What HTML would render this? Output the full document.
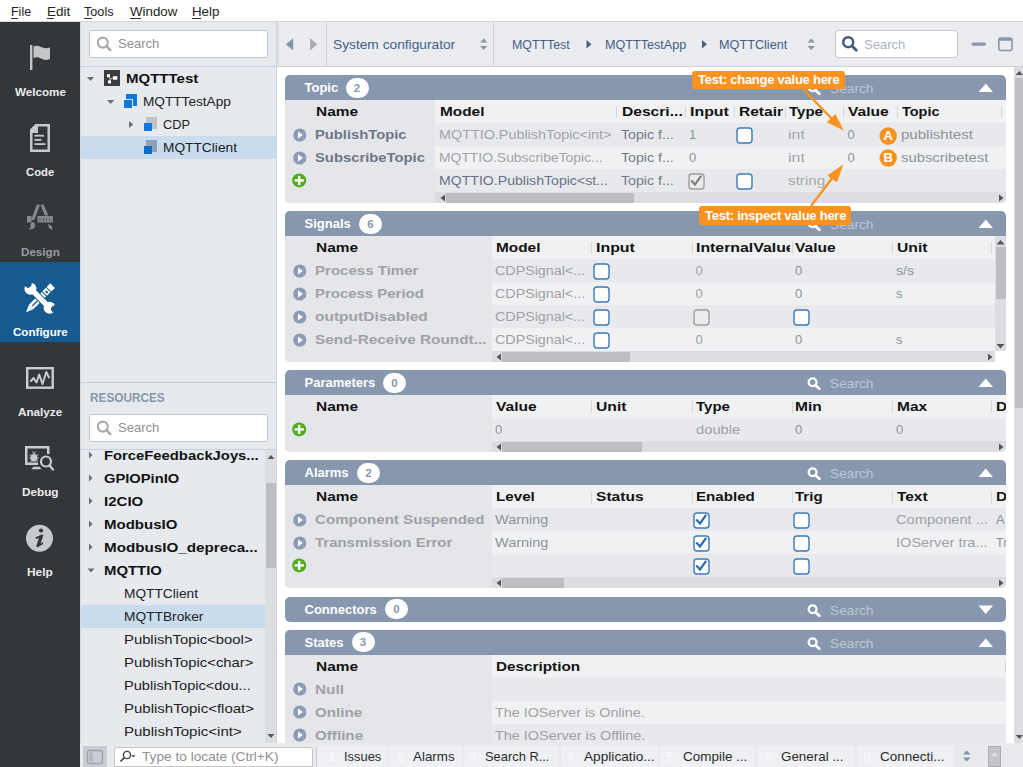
<!DOCTYPE html>
<html><head><meta charset="utf-8">
<style>
*{margin:0;padding:0;box-sizing:border-box}
html,body{width:1023px;height:767px;overflow:hidden;background:#fff;font-family:"Liberation Sans",sans-serif;position:relative}
.a{position:absolute}
.tx{white-space:nowrap}
.sbox{position:absolute;background:#fff;border:1px solid #c4c6ca;border-radius:3px}
.ul{position:absolute;height:1px;background:#333}
</style></head>
<body>

<div class="a" style="left:0;top:0;width:1023px;height:22px;background:#fff;border-bottom:1px solid #d6d6d6"></div>
<span class="a tx" style="left:11px;top:4px;line-height:15px;font-size:13px;transform:scaleX(0.9586);transform-origin:0 0;color:#232323;">File</span>
<div class="ul" style="left:11px;top:18px;width:7px"></div>
<span class="a tx" style="left:46.5px;top:4px;line-height:15px;font-size:13px;transform:scaleX(1.0371);transform-origin:0 0;color:#232323;">Edit</span>
<div class="ul" style="left:46.5px;top:18px;width:7.5px"></div>
<span class="a tx" style="left:84px;top:4px;line-height:15px;font-size:13px;transform:scaleX(0.9741);transform-origin:0 0;color:#232323;">Tools</span>
<div class="ul" style="left:84px;top:18px;width:7.5px"></div>
<span class="a tx" style="left:130.3px;top:4px;line-height:15px;font-size:13px;transform:scaleX(1.0233);transform-origin:0 0;color:#232323;">Window</span>
<div class="ul" style="left:130.3px;top:18px;width:11px"></div>
<span class="a tx" style="left:192.4px;top:4px;line-height:15px;font-size:13px;transform:scaleX(1.0240);transform-origin:0 0;color:#232323;">Help</span>
<div class="ul" style="left:192.4px;top:18px;width:8.5px"></div>
<div class="a" style="left:0;top:22px;width:80px;height:745px;background:#32373c"></div>

  <div class="a" style="left:0;top:262px;width:80px;height:80px;background:#175a8f"></div>
  <svg class="a" style="left:0;top:22px" width="80" height="600" viewBox="0 22 80 600">
    <!-- flag -->
    <rect x="30" y="45" width="2.4" height="25" fill="#c4c5c6"/>
    <path d="M33.5 46.5 Q37 45 41 47 Q45 49 50 47.5 L50 59 Q45 61 41 58.5 Q37 56.5 33.5 58 Z" fill="#c4c5c6"/>
    <!-- code doc -->
    <path d="M35.6 124 L50 124 L50 152 L30 152 L30 129.6 Z M32.5 133 L32.5 149.5 L47.5 149.5 L47.5 126.5 L38 126.5 L38 133 Z" fill="#c8c9ca" fill-rule="evenodd"/>
    <path d="M30.5 129.5 L35.8 124.2 L38 124.2 L38 132 L30.5 132 Z" fill="#c8c9ca"/>
    <rect x="34.5" y="134.8" width="9.5" height="1.8" fill="#c8c9ca"/>
    <rect x="34.5" y="139" width="7" height="1.8" fill="#c8c9ca"/>
    <rect x="34.5" y="143.2" width="11" height="1.8" fill="#c8c9ca"/>
    <!-- design -->
    <g fill="#85898d">
      <path d="M36.6 204.8 L40.2 204.8 L34.3 220 L31.2 220 Z"/>
      <path d="M40.4 204.8 L43.8 204.8 L48.3 215.5 L44.8 215.5 Z"/>
      <rect x="37.5" y="216" width="15.3" height="6.5"/>
      <rect x="27" y="216" width="4.5" height="6.5"/>
      <path d="M33 222 Q36 223 35 227 Q33 230 28.5 229.5 Q31 228 30.5 225.5 Q30 223 33 222 Z"/>
      <path d="M48 224 L52 226 L52.5 230 L49 228 Z"/>
    </g>
    <g fill="#5d6165"><rect x="39.5" y="218" width="1" height="3"/><rect x="43" y="218" width="1.5" height="3"/><rect x="46" y="218" width="1" height="3"/><rect x="49" y="218" width="1" height="3"/></g>
    <!-- configure -->
    <g transform="translate(40,298.2) rotate(-45)">
      <path d="M-19.8 0 L-12.5 -3.1 L-12.5 3.1 Z" fill="#fff"/>
      <rect x="-12.5" y="-3.1" width="18" height="6.2" fill="#fff"/>
      <rect x="-11" y="-0.6" width="7" height="1.2" fill="#175a8f"/>
      <rect x="6.6" y="-3.1" width="5" height="6.2" fill="#fff"/>
      <rect x="8" y="-1" width="2" height="2.6" fill="#175a8f"/>
      <rect x="12.6" y="-3.3" width="5.2" height="6.6" fill="#fff"/>
    </g>
    <g transform="translate(40,298.2) rotate(45)">
      <rect x="-12" y="-2.7" width="24" height="5.4" fill="#fff" stroke="#175a8f" stroke-width="2"/>
      <circle cx="-13.5" cy="0" r="6" fill="#fff" stroke="#175a8f" stroke-width="0"/>
      <circle cx="13.5" cy="0" r="6" fill="#fff"/>
      <rect x="-12" y="-2.7" width="24" height="5.4" fill="#fff"/>
      <circle cx="-18.5" cy="-1.5" r="3.6" fill="#175a8f"/>
      <circle cx="18" cy="-2.8" r="3.6" fill="#175a8f"/>
    </g>
    <!-- analyze -->
    <rect x="27.2" y="368.2" width="25.5" height="19.5" fill="none" stroke="#cbcccd" stroke-width="2.4"/>
    <polyline points="31,381 33.5,378 36.5,382.5 39.2,374.5 42.5,384 46.3,372 49,377.5" fill="none" stroke="#cbcccd" stroke-width="2" stroke-linejoin="round" stroke-linecap="round"/>
    <!-- debug -->
    <path d="M25 446 L49.5 446 L49.5 454 L47 454 L47 448.5 L27.5 448.5 L27.5 462.5 L38 462.5 L38 465 L25 465 Z" fill="#cbcccd"/>
    <path d="M33.3 466.8 L39.7 466.8 L41.5 469.3 L31.5 469.3 Z" fill="#cbcccd"/>
    <circle cx="46" cy="461.5" r="5" fill="none" stroke="#cbcccd" stroke-width="2.2"/>
    <line x1="49.5" y1="465.5" x2="53" y2="469.5" stroke="#cbcccd" stroke-width="2.4" stroke-linecap="round"/>
    <ellipse cx="34" cy="457.8" rx="3.6" ry="3.4" fill="#cbcccd"/><path d="M29.5 455 L38.5 455 M29.3 458 L38.7 458 M29.8 461 L38.2 461" stroke="#cbcccd" stroke-width="0.8"/>
    <path d="M32.5 451.5 L34 454.5 L35.5 451.5" stroke="#cbcccd" stroke-width="0.9" fill="none"/>
    <!-- help -->
    <circle cx="39.5" cy="538.2" r="13.5" fill="#c8c9cb"/>
    <circle cx="41" cy="530.5" r="2.1" fill="#32373c"/>
    <path d="M35.6 537.3 L42 534.4 L43.4 535 L40.6 543.4 L43.2 542.1 L42.7 544.2 L37.8 547.2 L36.2 546.4 L38.9 538 L36 539 Z" fill="#32373c"/>
  </svg>
  
<span class="a tx" style="left:14.5625px;top:86px;line-height:12px;font-size:11.0px;font-weight:bold;transform:scaleX(1.0579);transform-origin:0 0;color:#ececec;">Welcome</span>
<span class="a tx" style="left:25.921875px;top:166px;line-height:12px;font-size:11.0px;font-weight:bold;transform:scaleX(1.0239);transform-origin:0 0;color:#ececec;">Code</span>
<span class="a tx" style="left:20.6328125px;top:246px;line-height:12px;font-size:11.0px;font-weight:bold;transform:scaleX(1.0562);transform-origin:0 0;color:#999b9d;">Design</span>
<span class="a tx" style="left:12.625px;top:326px;line-height:12px;font-size:11.0px;font-weight:bold;transform:scaleX(1.0542);transform-origin:0 0;color:#ffffff;">Configure</span>
<span class="a tx" style="left:17.921875px;top:406px;line-height:12px;font-size:11.0px;font-weight:bold;transform:scaleX(1.0622);transform-origin:0 0;color:#ececec;">Analyze</span>
<span class="a tx" style="left:21.7421875px;top:486px;line-height:12px;font-size:11.0px;font-weight:bold;transform:scaleX(1.0671);transform-origin:0 0;color:#ececec;">Debug</span>
<span class="a tx" style="left:27.1328125px;top:566px;line-height:12px;font-size:11.0px;font-weight:bold;transform:scaleX(1.0796);transform-origin:0 0;color:#ececec;">Help</span>
<div class="a" style="left:80px;top:22px;width:197px;height:721px;background:#e6e9ee;border-left:1px solid #d3d6db;border-right:1px solid #d0d3d8"></div>
<div class="sbox" style="left:89px;top:30px;width:179px;height:28px"></div>
<svg class="a" style="left:95px;top:35px" width="18" height="18" viewBox="0 0 18 18"><circle cx="7.8" cy="7.6" r="5" fill="none" stroke="#a9abae" stroke-width="2.1"/><line x1="11.4" y1="11.2" x2="15.3" y2="15.1" stroke="#a9abae" stroke-width="2.6" stroke-linecap="round"/></svg>
<span class="a tx" style="left:117.5px;top:36px;line-height:16px;font-size:13px;transform:scaleX(1.0014);transform-origin:0 0;color:#8e9093;">Search</span>
<div class="a" style="left:81px;top:66px;width:195px;height:1px;background:#c9d3df"></div>
<div class="a" style="left:81px;top:136px;width:195px;height:23px;background:#c8dced"></div>
<svg class="a" style="left:80px;top:67px" width="197" height="92" viewBox="80 67 197 92">
  <path d="M87 77 L94 77 L90.5 81 Z" fill="#6b6e72"/>
  <rect x="104" y="70" width="16" height="16" fill="#3b3c3e"/>
  <g fill="#fff"><rect x="107" y="74.2" width="3" height="3"/><rect x="108" y="80.4" width="3" height="3"/><rect x="113" y="76.2" width="4.3" height="3.5"/></g><path d="M108.8 76.5 L110.3 79 L113.2 78 M110.3 79 L109.6 81" fill="none" stroke="#ddd" stroke-width="0.9"/>
  <path d="M107 100 L114.3 100 L110.6 104 Z" fill="#6b6e72"/>
  <rect x="126" y="94" width="11" height="12" fill="#0b77de"/>
  <rect x="123.5" y="99.5" width="9" height="9" fill="#0b77de" stroke="#e6e9ee" stroke-width="1"/>
  <path d="M129 121 L133.3 124.5 L129 128 Z" fill="#6b6e72"/>
  <rect x="146" y="117" width="11" height="12" fill="#c2c3c6"/>
  <rect x="144" y="123" width="8" height="8" fill="#0b77de"/>
  <rect x="146" y="140" width="11" height="12" fill="#8ea0b5"/>
  <rect x="144" y="146" width="8" height="8" fill="#0c70c8"/>
</svg>
<span class="a tx" style="left:126.4px;top:67px;line-height:23px;font-size:13px;font-weight:bold;transform:scaleX(1.1543);transform-origin:0 0;color:#111;">MQTTTest</span>
<span class="a tx" style="left:143px;top:90px;line-height:23px;font-size:13px;transform:scaleX(1.0482);transform-origin:0 0;color:#222;">MQTTTestApp</span>
<span class="a tx" style="left:163.4px;top:113px;line-height:23px;font-size:13px;transform:scaleX(0.9815);transform-origin:0 0;color:#222;">CDP</span>
<span class="a tx" style="left:163.4px;top:136px;line-height:23px;font-size:13px;transform:scaleX(1.0556);transform-origin:0 0;color:#222;">MQTTClient</span>
<div class="a" style="left:81px;top:382px;width:195px;height:1px;background:#c9cbcf"></div>
<span class="a tx" style="left:90px;top:391px;line-height:14px;font-size:12.0px;font-weight:bold;transform:scaleX(0.9826);transform-origin:0 0;color:#8797ab;">RESOURCES</span>
<div class="sbox" style="left:89px;top:414px;width:179px;height:28px"></div>
<svg class="a" style="left:95px;top:419px" width="18" height="18" viewBox="0 0 18 18"><circle cx="7.8" cy="7.6" r="5" fill="none" stroke="#a9abae" stroke-width="2.1"/><line x1="11.4" y1="11.2" x2="15.3" y2="15.1" stroke="#a9abae" stroke-width="2.6" stroke-linecap="round"/></svg>
<span class="a tx" style="left:117.5px;top:420px;line-height:16px;font-size:13px;transform:scaleX(1.0014);transform-origin:0 0;color:#8e9093;">Search</span>
<div class="a" style="left:81px;top:449px;width:195px;height:1px;background:#c9d3df"></div>
<div class="a" style="left:81px;top:450px;width:195px;height:293px;overflow:hidden">
<div class="a" style="left:0;top:155px;width:184px;height:23px;background:#c8dced"></div>
<div class="a" style="left:184px;top:0;width:12px;height:293px;background:#dcdee2"></div>
<div class="a" style="left:184.5px;top:33px;width:11px;height:85px;background:#bdbec2"></div>
<svg class="a" style="left:0;top:0" width="196" height="293">
    <path d="M186.5 9 L193.5 9 L190 5 Z" fill="#55585c"/>
    <path d="M186.5 284 L193.5 284 L190 288 Z" fill="#55585c"/>
    <g fill="#6b6e72" transform="translate(0,1)">
      <path d="M8 0.5 L11.5 4 L8 7.5 Z"/>
      <path d="M8 23.5 L11.5 27 L8 30.5 Z"/>
      <path d="M8 46.5 L11.5 50 L8 53.5 Z"/>
      <path d="M8 69.5 L11.5 73 L8 76.5 Z"/>
      <path d="M8 92.5 L11.5 96 L8 99.5 Z"/>
      <path d="M6.5 117.5 L13.5 117.5 L10 121.5 Z"/>
    </g>
  </svg>
<span class="a tx" style="left:23.4px;top:-6px;line-height:23px;font-size:13px;font-weight:bold;transform:scaleX(1.1388);transform-origin:0 0;color:#111;">ForceFeedbackJoys...</span>
<span class="a tx" style="left:23.4px;top:17px;line-height:23px;font-size:13px;font-weight:bold;transform:scaleX(1.1317);transform-origin:0 0;color:#111;">GPIOPinIO</span>
<span class="a tx" style="left:23.4px;top:40px;line-height:23px;font-size:13px;font-weight:bold;transform:scaleX(1.1582);transform-origin:0 0;color:#111;">I2CIO</span>
<span class="a tx" style="left:23.4px;top:63px;line-height:23px;font-size:13px;font-weight:bold;transform:scaleX(1.1546);transform-origin:0 0;color:#111;">ModbusIO</span>
<span class="a tx" style="left:23.4px;top:86px;line-height:23px;font-size:13px;font-weight:bold;transform:scaleX(1.1698);transform-origin:0 0;color:#111;">ModbusIO_depreca...</span>
<span class="a tx" style="left:23.4px;top:109px;line-height:23px;font-size:13px;font-weight:bold;transform:scaleX(1.1458);transform-origin:0 0;color:#111;">MQTTIO</span>
<span class="a tx" style="left:43px;top:132px;line-height:23px;font-size:13px;transform:scaleX(1.0556);transform-origin:0 0;color:#222;">MQTTClient</span>
<span class="a tx" style="left:43px;top:155px;line-height:23px;font-size:13px;transform:scaleX(1.0576);transform-origin:0 0;color:#222;">MQTTBroker</span>
<span class="a tx" style="left:43px;top:178px;line-height:23px;font-size:13px;transform:scaleX(1.1401);transform-origin:0 0;color:#222;">PublishTopic&lt;bool&gt;</span>
<span class="a tx" style="left:43px;top:201px;line-height:23px;font-size:13px;transform:scaleX(1.1411);transform-origin:0 0;color:#222;">PublishTopic&lt;char&gt;</span>
<span class="a tx" style="left:43px;top:224px;line-height:23px;font-size:13px;transform:scaleX(1.1202);transform-origin:0 0;color:#222;">PublishTopic&lt;dou...</span>
<span class="a tx" style="left:43px;top:247px;line-height:23px;font-size:13px;transform:scaleX(1.1529);transform-origin:0 0;color:#222;">PublishTopic&lt;float&gt;</span>
<span class="a tx" style="left:43px;top:270px;line-height:23px;font-size:13px;transform:scaleX(1.1552);transform-origin:0 0;color:#222;">PublishTopic&lt;int&gt;</span>
</div>
<div class="a" style="left:277px;top:22px;width:746px;height:45px;background:#ebecf0;border-bottom:1px solid #d0d1d4"></div>
<div class="a" style="left:277px;top:22px;width:2px;height:45px;background:#dfe0e3"></div>
<div class="a" style="left:326px;top:22px;width:1px;height:44px;background:#d3d4d7"></div>
<div class="a" style="left:493px;top:22px;width:1px;height:44px;background:#d3d4d7"></div>
<svg class="a" style="left:277px;top:22px" width="746" height="44" viewBox="277 22 746 44">
  <path d="M293.2 38.2 L293.2 50.5 L285.8 44.3 Z" fill="#8596ab"/>
  <path d="M310.1 38.2 L310.1 50.5 L317.3 44.3 Z" fill="#ababab"/>
  <path d="M480 42.5 L487.4 42.5 L483.7 38.5 Z M480 46 L487.4 46 L483.7 50 Z" fill="#8a96a6"/>
  <path d="M586.5 40 L591.5 44.3 L586.5 48.6 Z" fill="#4a5f7c"/>
  <path d="M702 40 L707 44.3 L702 48.6 Z" fill="#4a5f7c"/>
  <path d="M807.5 42.5 L815 42.5 L811.2 38.5 Z M807.5 46 L815 46 L811.2 50 Z" fill="#8a96a6"/>
  <rect x="971.5" y="42.5" width="14.5" height="3.2" rx="1.6" fill="#8797ad"/>
  <rect x="998.8" y="38" width="13.2" height="12.5" rx="2" fill="none" stroke="#8797ad" stroke-width="1.6"/>
  <rect x="998.8" y="38" width="13.2" height="2.8" fill="#8797ad"/>
</svg>
<span class="a tx" style="left:333.2px;top:37px;line-height:16px;font-size:13px;transform:scaleX(1.0570);transform-origin:0 0;color:#44608a;">System configurator</span>
<span class="a tx" style="left:512.2px;top:37px;line-height:16px;font-size:13px;transform:scaleX(0.9511);transform-origin:0 0;color:#44608a;">MQTTTest</span>
<span class="a tx" style="left:605.4px;top:37px;line-height:16px;font-size:13px;transform:scaleX(0.9684);transform-origin:0 0;color:#44608a;">MQTTTestApp</span>
<span class="a tx" style="left:718.6px;top:37px;line-height:16px;font-size:13px;transform:scaleX(0.9749);transform-origin:0 0;color:#44608a;">MQTTClient</span>
<div class="sbox" style="left:835px;top:30px;width:123px;height:28px"></div>
<svg class="a" style="left:841px;top:35px" width="18" height="18" viewBox="0 0 18 18"><circle cx="7.2" cy="7.2" r="5" fill="none" stroke="#3f5a7d" stroke-width="2.4"/><line x1="11" y1="11" x2="15.3" y2="15.3" stroke="#3f5a7d" stroke-width="2.8" stroke-linecap="round"/></svg>
<span class="a tx" style="left:864px;top:37px;line-height:16px;font-size:13px;transform:scaleX(1.0014);transform-origin:0 0;color:#a9b4c3;">Search</span>
<div class="a" style="left:285px;top:75px;width:721px;height:25px;background:#8797ae;border-radius:5px 5px 0 0"></div>
<span class="a tx" style="left:304.5px;top:75px;line-height:25px;font-size:13px;font-weight:bold;color:#fff">Topic</span>
<div class="a" style="left:345.5px;top:77.5px;width:23px;height:20px;border-radius:10px;background:#fff;text-align:center;line-height:20px;font-size:11.5px;font-weight:bold;color:#8797ae">2</div>
<svg class="a" style="left:806.5px;top:82px" width="15" height="13" viewBox="0 0 15 13"><circle cx="5.6" cy="5.3" r="3.9" fill="none" stroke="#fff" stroke-width="2.3"/><line x1="8.4" y1="8.2" x2="12.4" y2="11.8" stroke="#fff" stroke-width="2.6" stroke-linecap="round"/></svg>
<span class="a tx" style="left:830.3px;top:76px;line-height:25px;font-size:13.5px;transform:scaleX(1.0170);transform-origin:0 0;color:#bcc6d4;">Search</span>
<svg class="a" style="left:978px;top:83px" width="16" height="10"><path d="M0.5 9 L15 9 L7.75 0.6 Z" fill="#fff"/></svg>
<div class="a" style="left:285px;top:100px;width:721px;height:103px;background:#f0f1f3;border-radius:0 0 5px 5px;overflow:hidden">
<div class="a" style="left:0;top:23px;width:721px;height:23px;background:#e8e9ec"></div>
<div class="a" style="left:0;top:69px;width:721px;height:23px;background:#e8e9ec"></div>
<div class="a" style="left:0;top:92px;width:721px;height:11px;background:#dcdde0"></div>
<div class="a" style="left:0;top:0;width:150px;height:103px;background:#e4e6ea"></div>
</div>
<div class="a" style="left:616px;top:106px;width:1px;height:12px;background:#d6d7da"></div>
<div class="a" style="left:684.5px;top:106px;width:1px;height:12px;background:#d6d7da"></div>
<div class="a" style="left:734px;top:106px;width:1px;height:12px;background:#d6d7da"></div>
<div class="a" style="left:784.5px;top:106px;width:1px;height:12px;background:#d6d7da"></div>
<div class="a" style="left:843px;top:106px;width:1px;height:12px;background:#d6d7da"></div>
<div class="a" style="left:897px;top:106px;width:1px;height:12px;background:#d6d7da"></div>
<div class="a" style="left:1001px;top:106px;width:1px;height:12px;background:#d6d7da"></div>
<span class="a tx" style="left:315.5px;top:100px;line-height:23px;font-size:13px;font-weight:bold;transform:scaleX(1.1862);transform-origin:0 0;color:#111;">Name</span>
<span class="a tx" style="left:439.7px;top:100px;line-height:23px;font-size:13px;font-weight:bold;transform:scaleX(1.1837);transform-origin:0 0;color:#111;">Model</span>
<span class="a tx" style="left:621.6px;top:100px;line-height:23px;font-size:13px;font-weight:bold;transform:scaleX(1.2002);transform-origin:0 0;color:#111;">Descri...</span>
<span class="a tx" style="left:689.7px;top:100px;line-height:23px;font-size:13px;font-weight:bold;transform:scaleX(1.2238);transform-origin:0 0;color:#111;">Input</span>
<div class="a" style="left:739.3px;top:100px;width:44px;height:23px;overflow:hidden"><span class="a tx" style="left:0px;top:0px;line-height:23px;font-size:13px;font-weight:bold;transform:scaleX(1.1959);transform-origin:0 0;color:#111;">Retain</span></div>
<span class="a tx" style="left:789px;top:100px;line-height:23px;font-size:13px;font-weight:bold;transform:scaleX(1.1546);transform-origin:0 0;color:#111;">Type</span>
<span class="a tx" style="left:848.2px;top:100px;line-height:23px;font-size:13px;font-weight:bold;transform:scaleX(1.1964);transform-origin:0 0;color:#111;">Value</span>
<span class="a tx" style="left:902px;top:100px;line-height:23px;font-size:13px;font-weight:bold;transform:scaleX(1.1145);transform-origin:0 0;color:#111;">Topic</span>
<svg class="a" style="left:292.5px;top:127.5px" width="14" height="14" viewBox="0 0 14 14"><circle cx="6.8" cy="7" r="6.6" fill="#8c9cb4"/><path d="M5 3.6 L10 7 L5 10.4 Z" fill="#fff"/></svg>
<span class="a tx" style="left:314.7px;top:123px;line-height:23px;font-size:13px;font-weight:bold;transform:scaleX(1.1350);transform-origin:0 0;color:#6d7686;">PublishTopic</span>
<span class="a tx" style="left:439px;top:123px;line-height:23px;font-size:13px;transform:scaleX(1.1051);transform-origin:0 0;color:#a2a4a8;">MQTTIO.PublishTopic&lt;int&gt;</span>
<span class="a tx" style="left:621.1px;top:123px;line-height:23px;font-size:13px;transform:scaleX(1.0909);transform-origin:0 0;color:#737b87;">Topic f...</span>
<span class="a tx" style="left:689px;top:123px;line-height:23px;font-size:13px;letter-spacing:1.035px;color:#8d939b;">1</span>
<svg class="a" style="left:736px;top:126.5px" width="17" height="17" viewBox="0 0 17 17"><rect x="1" y="1" width="15" height="15" rx="3" fill="#fff" stroke="#3c7bb7" stroke-width="1.4"/></svg>
<span class="a tx" style="left:788.2px;top:123px;line-height:23px;font-size:13px;transform:scaleX(1.2336);transform-origin:0 0;color:#a6a8ab;">int</span>
<span class="a tx" style="left:847.4px;top:123px;line-height:23px;font-size:13px;letter-spacing:1.035px;color:#8d939b;">0</span>
<span class="a tx" style="left:901px;top:123px;line-height:23px;font-size:13px;transform:scaleX(1.1569);transform-origin:0 0;color:#8d939b;">publishtest</span>
<svg class="a" style="left:292.5px;top:150.5px" width="14" height="14" viewBox="0 0 14 14"><circle cx="6.8" cy="7" r="6.6" fill="#8c9cb4"/><path d="M5 3.6 L10 7 L5 10.4 Z" fill="#fff"/></svg>
<span class="a tx" style="left:314.7px;top:146px;line-height:23px;font-size:13px;font-weight:bold;transform:scaleX(1.1382);transform-origin:0 0;color:#6d7686;">SubscribeTopic</span>
<span class="a tx" style="left:439px;top:146px;line-height:23px;font-size:13px;transform:scaleX(1.0685);transform-origin:0 0;color:#a2a4a8;">MQTTIO.SubscribeTopic...</span>
<span class="a tx" style="left:621.1px;top:146px;line-height:23px;font-size:13px;transform:scaleX(1.0909);transform-origin:0 0;color:#737b87;">Topic f...</span>
<span class="a tx" style="left:689px;top:146px;line-height:23px;font-size:13px;letter-spacing:1.035px;color:#8d939b;">0</span>
<span class="a tx" style="left:788.2px;top:146px;line-height:23px;font-size:13px;transform:scaleX(1.2336);transform-origin:0 0;color:#a6a8ab;">int</span>
<span class="a tx" style="left:847.4px;top:146px;line-height:23px;font-size:13px;letter-spacing:1.035px;color:#8d939b;">0</span>
<span class="a tx" style="left:901px;top:146px;line-height:23px;font-size:13px;transform:scaleX(1.1399);transform-origin:0 0;color:#8d939b;">subscribetest</span>
<svg class="a" style="left:292px;top:173px" width="15" height="15" viewBox="0 0 15 15"><circle cx="7.2" cy="7.4" r="7" fill="#4eae18"/><rect x="2.6" y="6.2" width="9.2" height="2.5" fill="#fff"/><rect x="5.95" y="2.85" width="2.5" height="9.2" fill="#fff"/></svg>
<span class="a tx" style="left:439px;top:169px;line-height:23px;font-size:13px;transform:scaleX(1.0847);transform-origin:0 0;color:#66728a;">MQTTIO.PublishTopic&lt;st...</span>
<span class="a tx" style="left:621.1px;top:169px;line-height:23px;font-size:13px;transform:scaleX(1.0909);transform-origin:0 0;color:#737b87;">Topic f...</span>
<svg class="a" style="left:687.5px;top:172.5px" width="17" height="17" viewBox="0 0 17 17"><rect x="1" y="1" width="15" height="15" rx="3" fill="#ececec" stroke="#9c9d9f" stroke-width="1.4"/><path d="M4 8.2 L7 11.5 L12.5 3.8" fill="none" stroke="#808080" stroke-width="2.2" stroke-linecap="square"/></svg>
<svg class="a" style="left:736px;top:172.5px" width="17" height="17" viewBox="0 0 17 17"><rect x="1" y="1" width="15" height="15" rx="3" fill="#fff" stroke="#3c7bb7" stroke-width="1.4"/></svg>
<span class="a tx" style="left:788.2px;top:169px;line-height:23px;font-size:13px;transform:scaleX(1.1733);transform-origin:0 0;color:#a6a8ab;">string</span>
<svg class="a" style="left:438.5px;top:194px" width="8" height="8"><path d="M1.5 4 L6 0.5 L6 7.5 Z" fill="#555"/></svg>
<div class="a" style="left:446px;top:192.5px;width:188px;height:10px;background:#bdbec2"></div>
<svg class="a" style="left:997px;top:194px" width="8" height="8"><path d="M6.5 4 L2 0.5 L2 7.5 Z" fill="#555"/></svg>
<div class="a" style="left:285px;top:211px;width:721px;height:25px;background:#8797ae;border-radius:5px 5px 0 0"></div>
<span class="a tx" style="left:304.5px;top:211px;line-height:25px;font-size:13px;font-weight:bold;color:#fff">Signals</span>
<div class="a" style="left:359px;top:213.5px;width:23px;height:20px;border-radius:10px;background:#fff;text-align:center;line-height:20px;font-size:11.5px;font-weight:bold;color:#8797ae">6</div>
<svg class="a" style="left:806.5px;top:218px" width="15" height="13" viewBox="0 0 15 13"><circle cx="5.6" cy="5.3" r="3.9" fill="none" stroke="#fff" stroke-width="2.3"/><line x1="8.4" y1="8.2" x2="12.4" y2="11.8" stroke="#fff" stroke-width="2.6" stroke-linecap="round"/></svg>
<span class="a tx" style="left:830.3px;top:212px;line-height:25px;font-size:13.5px;transform:scaleX(1.0170);transform-origin:0 0;color:#bcc6d4;">Search</span>
<svg class="a" style="left:978px;top:219px" width="16" height="10"><path d="M0.5 9 L15 9 L7.75 0.6 Z" fill="#fff"/></svg>
<div class="a" style="left:285px;top:236px;width:721px;height:126px;background:#f0f1f3;border-radius:0 0 5px 5px;overflow:hidden">
<div class="a" style="left:0;top:23px;width:721px;height:23px;background:#e8e9ec"></div>
<div class="a" style="left:0;top:69px;width:721px;height:23px;background:#e8e9ec"></div>
<div class="a" style="left:0;top:115px;width:721px;height:11px;background:#dcdde0"></div>
<div class="a" style="left:0;top:0;width:207px;height:126px;background:#e4e6ea"></div>
</div>
<div class="a" style="left:591px;top:242px;width:1px;height:12px;background:#d6d7da"></div>
<div class="a" style="left:691.5px;top:242px;width:1px;height:12px;background:#d6d7da"></div>
<div class="a" style="left:791.5px;top:242px;width:1px;height:12px;background:#d6d7da"></div>
<div class="a" style="left:891.5px;top:242px;width:1px;height:12px;background:#d6d7da"></div>
<div class="a" style="left:990.5px;top:242px;width:1px;height:12px;background:#d6d7da"></div>
<span class="a tx" style="left:315.5px;top:236px;line-height:23px;font-size:13px;font-weight:bold;transform:scaleX(1.1862);transform-origin:0 0;color:#111;">Name</span>
<span class="a tx" style="left:495.5px;top:236px;line-height:23px;font-size:13px;font-weight:bold;transform:scaleX(1.1837);transform-origin:0 0;color:#111;">Model</span>
<span class="a tx" style="left:595.7px;top:236px;line-height:23px;font-size:13px;font-weight:bold;transform:scaleX(1.2238);transform-origin:0 0;color:#111;">Input</span>
<div class="a" style="left:696px;top:236px;width:94px;height:23px;overflow:hidden"><span class="a tx" style="left:0px;top:0px;line-height:23px;font-size:13px;font-weight:bold;transform:scaleX(1.2189);transform-origin:0 0;color:#111;">InternalValue</span></div>
<span class="a tx" style="left:795.4px;top:236px;line-height:23px;font-size:13px;font-weight:bold;transform:scaleX(1.1964);transform-origin:0 0;color:#111;">Value</span>
<span class="a tx" style="left:896.5px;top:236px;line-height:23px;font-size:13px;font-weight:bold;transform:scaleX(1.2064);transform-origin:0 0;color:#111;">Unit</span>
<svg class="a" style="left:292.5px;top:263.5px" width="14" height="14" viewBox="0 0 14 14"><circle cx="6.8" cy="7" r="6.6" fill="#8c9cb4"/><path d="M5 3.6 L10 7 L5 10.4 Z" fill="#fff"/></svg>
<span class="a tx" style="left:314.7px;top:259px;line-height:23px;font-size:13px;font-weight:bold;transform:scaleX(1.1579);transform-origin:0 0;color:#9ea1a6;">Process Timer</span>
<span class="a tx" style="left:495px;top:259px;line-height:23px;font-size:13px;transform:scaleX(1.0989);transform-origin:0 0;color:#9fa1a4;">CDPSignal&lt;...</span>
<svg class="a" style="left:592.5px;top:262.5px" width="17" height="17" viewBox="0 0 17 17"><rect x="1" y="1" width="15" height="15" rx="3" fill="#fff" stroke="#3c7bb7" stroke-width="1.4"/></svg>
<span class="a tx" style="left:695.5px;top:259px;line-height:23px;font-size:13px;letter-spacing:1.035px;color:#9fa1a4;">0</span>
<span class="a tx" style="left:795px;top:259px;line-height:23px;font-size:13px;letter-spacing:1.035px;color:#8d939b;">0</span>
<span class="a tx" style="left:896px;top:259px;line-height:23px;font-size:13px;transform:scaleX(1.0778);transform-origin:0 0;color:#8d939b;">s/s</span>
<svg class="a" style="left:292.5px;top:286.5px" width="14" height="14" viewBox="0 0 14 14"><circle cx="6.8" cy="7" r="6.6" fill="#8c9cb4"/><path d="M5 3.6 L10 7 L5 10.4 Z" fill="#fff"/></svg>
<span class="a tx" style="left:314.7px;top:282px;line-height:23px;font-size:13px;font-weight:bold;transform:scaleX(1.1498);transform-origin:0 0;color:#9ea1a6;">Process Period</span>
<span class="a tx" style="left:495px;top:282px;line-height:23px;font-size:13px;transform:scaleX(1.0989);transform-origin:0 0;color:#9fa1a4;">CDPSignal&lt;...</span>
<svg class="a" style="left:592.5px;top:285.5px" width="17" height="17" viewBox="0 0 17 17"><rect x="1" y="1" width="15" height="15" rx="3" fill="#fff" stroke="#3c7bb7" stroke-width="1.4"/></svg>
<span class="a tx" style="left:695.5px;top:282px;line-height:23px;font-size:13px;letter-spacing:1.035px;color:#9fa1a4;">0</span>
<span class="a tx" style="left:795px;top:282px;line-height:23px;font-size:13px;letter-spacing:1.035px;color:#8d939b;">0</span>
<span class="a tx" style="left:896px;top:282px;line-height:23px;font-size:13px;letter-spacing:0.266px;color:#8d939b;">s</span>
<svg class="a" style="left:292.5px;top:309.5px" width="14" height="14" viewBox="0 0 14 14"><circle cx="6.8" cy="7" r="6.6" fill="#8c9cb4"/><path d="M5 3.6 L10 7 L5 10.4 Z" fill="#fff"/></svg>
<span class="a tx" style="left:314.7px;top:305px;line-height:23px;font-size:13px;font-weight:bold;transform:scaleX(1.1926);transform-origin:0 0;color:#9ea1a6;">outputDisabled</span>
<span class="a tx" style="left:495px;top:305px;line-height:23px;font-size:13px;transform:scaleX(1.0989);transform-origin:0 0;color:#9fa1a4;">CDPSignal&lt;...</span>
<svg class="a" style="left:592.5px;top:308.5px" width="17" height="17" viewBox="0 0 17 17"><rect x="1" y="1" width="15" height="15" rx="3" fill="#fff" stroke="#3c7bb7" stroke-width="1.4"/></svg>
<svg class="a" style="left:693px;top:308.5px" width="17" height="17" viewBox="0 0 17 17"><rect x="1" y="1" width="15" height="15" rx="3" fill="#ececec" stroke="#9c9d9f" stroke-width="1.4"/></svg>
<svg class="a" style="left:793px;top:308.5px" width="17" height="17" viewBox="0 0 17 17"><rect x="1" y="1" width="15" height="15" rx="3" fill="#fff" stroke="#3c7bb7" stroke-width="1.4"/></svg>
<svg class="a" style="left:292.5px;top:332.5px" width="14" height="14" viewBox="0 0 14 14"><circle cx="6.8" cy="7" r="6.6" fill="#8c9cb4"/><path d="M5 3.6 L10 7 L5 10.4 Z" fill="#fff"/></svg>
<span class="a tx" style="left:314.7px;top:328px;line-height:23px;font-size:13px;font-weight:bold;transform:scaleX(1.1814);transform-origin:0 0;color:#9ea1a6;">Send-Receive Roundt...</span>
<span class="a tx" style="left:495px;top:328px;line-height:23px;font-size:13px;transform:scaleX(1.0989);transform-origin:0 0;color:#9fa1a4;">CDPSignal&lt;...</span>
<svg class="a" style="left:592.5px;top:331.5px" width="17" height="17" viewBox="0 0 17 17"><rect x="1" y="1" width="15" height="15" rx="3" fill="#fff" stroke="#3c7bb7" stroke-width="1.4"/></svg>
<span class="a tx" style="left:695.5px;top:328px;line-height:23px;font-size:13px;letter-spacing:1.035px;color:#9fa1a4;">0</span>
<span class="a tx" style="left:795px;top:328px;line-height:23px;font-size:13px;letter-spacing:1.035px;color:#8d939b;">0</span>
<span class="a tx" style="left:896px;top:328px;line-height:23px;font-size:13px;letter-spacing:0.266px;color:#8d939b;">s</span>
<svg class="a" style="left:494.5px;top:353px" width="8" height="8"><path d="M1.5 4 L6 0.5 L6 7.5 Z" fill="#555"/></svg>
<div class="a" style="left:502px;top:351.5px;width:128px;height:10px;background:#bdbec2"></div>
<svg class="a" style="left:986px;top:353px" width="8" height="8"><path d="M6.5 4 L2 0.5 L2 7.5 Z" fill="#555"/></svg>
<div class="a" style="left:995px;top:236px;width:11px;height:115px;background:#dcdde0"></div>
<div class="a" style="left:995.5px;top:247px;width:10px;height:52px;background:#bdbec2"></div>
<svg class="a" style="left:996px;top:238px" width="9" height="8"><path d="M0.5 6.5 L8.5 6.5 L4.5 2 Z" fill="#555"/></svg>
<svg class="a" style="left:996px;top:342px" width="9" height="8"><path d="M0.5 2 L8.5 2 L4.5 6.5 Z" fill="#555"/></svg>
<div class="a" style="left:995px;top:351px;width:11px;height:12px;background:#fff"></div>
<div class="a" style="left:285px;top:370px;width:721px;height:25px;background:#8797ae;border-radius:5px 5px 0 0"></div>
<span class="a tx" style="left:304.5px;top:370px;line-height:25px;font-size:13px;font-weight:bold;color:#fff">Parameters</span>
<div class="a" style="left:383px;top:372.5px;width:23px;height:20px;border-radius:10px;background:#fff;text-align:center;line-height:20px;font-size:11.5px;font-weight:bold;color:#8797ae">0</div>
<svg class="a" style="left:806.5px;top:377px" width="15" height="13" viewBox="0 0 15 13"><circle cx="5.6" cy="5.3" r="3.9" fill="none" stroke="#fff" stroke-width="2.3"/><line x1="8.4" y1="8.2" x2="12.4" y2="11.8" stroke="#fff" stroke-width="2.6" stroke-linecap="round"/></svg>
<span class="a tx" style="left:830.3px;top:371px;line-height:25px;font-size:13.5px;transform:scaleX(1.0170);transform-origin:0 0;color:#bcc6d4;">Search</span>
<svg class="a" style="left:978px;top:378px" width="16" height="10"><path d="M0.5 9 L15 9 L7.75 0.6 Z" fill="#fff"/></svg>
<div class="a" style="left:285px;top:395px;width:721px;height:57px;background:#f0f1f3;border-radius:0 0 5px 5px;overflow:hidden">
<div class="a" style="left:0;top:23px;width:721px;height:23px;background:#e8e9ec"></div>
<div class="a" style="left:0;top:46px;width:721px;height:11px;background:#dcdde0"></div>
<div class="a" style="left:0;top:0;width:207px;height:57px;background:#e4e6ea"></div>
</div>
<div class="a" style="left:591px;top:401px;width:1px;height:12px;background:#d6d7da"></div>
<div class="a" style="left:691.5px;top:401px;width:1px;height:12px;background:#d6d7da"></div>
<div class="a" style="left:791.5px;top:401px;width:1px;height:12px;background:#d6d7da"></div>
<div class="a" style="left:891.5px;top:401px;width:1px;height:12px;background:#d6d7da"></div>
<div class="a" style="left:990.5px;top:401px;width:1px;height:12px;background:#d6d7da"></div>
<span class="a tx" style="left:315.5px;top:395px;line-height:23px;font-size:13px;font-weight:bold;transform:scaleX(1.1862);transform-origin:0 0;color:#111;">Name</span>
<span class="a tx" style="left:495.5px;top:395px;line-height:23px;font-size:13px;font-weight:bold;transform:scaleX(1.1964);transform-origin:0 0;color:#111;">Value</span>
<span class="a tx" style="left:595.7px;top:395px;line-height:23px;font-size:13px;font-weight:bold;transform:scaleX(1.2064);transform-origin:0 0;color:#111;">Unit</span>
<span class="a tx" style="left:696px;top:395px;line-height:23px;font-size:13px;font-weight:bold;transform:scaleX(1.1546);transform-origin:0 0;color:#111;">Type</span>
<span class="a tx" style="left:795.4px;top:395px;line-height:23px;font-size:13px;font-weight:bold;transform:scaleX(1.1902);transform-origin:0 0;color:#111;">Min</span>
<span class="a tx" style="left:896.5px;top:395px;line-height:23px;font-size:13px;font-weight:bold;transform:scaleX(1.1900);transform-origin:0 0;color:#111;">Max</span>
<div class="a" style="left:996px;top:395px;width:10px;height:23px;overflow:hidden"><span class="a tx" style="left:0px;top:0px;line-height:23px;font-size:13px;font-weight:bold;transform:scaleX(1.1757);transform-origin:0 0;color:#111;">Description</span></div>
<svg class="a" style="left:292px;top:422px" width="15" height="15" viewBox="0 0 15 15"><circle cx="7.2" cy="7.4" r="7" fill="#4eae18"/><rect x="2.6" y="6.2" width="9.2" height="2.5" fill="#fff"/><rect x="5.95" y="2.85" width="2.5" height="9.2" fill="#fff"/></svg>
<span class="a tx" style="left:495px;top:418px;line-height:23px;font-size:13px;letter-spacing:1.035px;color:#8d939b;">0</span>
<span class="a tx" style="left:696px;top:418px;line-height:23px;font-size:13px;transform:scaleX(1.1347);transform-origin:0 0;color:#9fa1a4;">double</span>
<span class="a tx" style="left:795px;top:418px;line-height:23px;font-size:13px;letter-spacing:1.035px;color:#8d939b;">0</span>
<span class="a tx" style="left:896px;top:418px;line-height:23px;font-size:13px;letter-spacing:1.035px;color:#8d939b;">0</span>
<svg class="a" style="left:494.5px;top:443px" width="8" height="8"><path d="M1.5 4 L6 0.5 L6 7.5 Z" fill="#555"/></svg>
<div class="a" style="left:502px;top:441.5px;width:140px;height:10px;background:#bdbec2"></div>
<svg class="a" style="left:997px;top:443px" width="8" height="8"><path d="M6.5 4 L2 0.5 L2 7.5 Z" fill="#555"/></svg>
<div class="a" style="left:285px;top:460px;width:721px;height:25px;background:#8797ae;border-radius:5px 5px 0 0"></div>
<span class="a tx" style="left:304.5px;top:460px;line-height:25px;font-size:13px;font-weight:bold;color:#fff">Alarms</span>
<div class="a" style="left:357px;top:462.5px;width:23px;height:20px;border-radius:10px;background:#fff;text-align:center;line-height:20px;font-size:11.5px;font-weight:bold;color:#8797ae">2</div>
<svg class="a" style="left:806.5px;top:467px" width="15" height="13" viewBox="0 0 15 13"><circle cx="5.6" cy="5.3" r="3.9" fill="none" stroke="#fff" stroke-width="2.3"/><line x1="8.4" y1="8.2" x2="12.4" y2="11.8" stroke="#fff" stroke-width="2.6" stroke-linecap="round"/></svg>
<span class="a tx" style="left:830.3px;top:461px;line-height:25px;font-size:13.5px;transform:scaleX(1.0170);transform-origin:0 0;color:#bcc6d4;">Search</span>
<svg class="a" style="left:978px;top:468px" width="16" height="10"><path d="M0.5 9 L15 9 L7.75 0.6 Z" fill="#fff"/></svg>
<div class="a" style="left:285px;top:485px;width:721px;height:103px;background:#f0f1f3;border-radius:0 0 5px 5px;overflow:hidden">
<div class="a" style="left:0;top:23px;width:721px;height:23px;background:#e8e9ec"></div>
<div class="a" style="left:0;top:69px;width:721px;height:23px;background:#e8e9ec"></div>
<div class="a" style="left:0;top:92px;width:721px;height:11px;background:#dcdde0"></div>
<div class="a" style="left:0;top:0;width:207px;height:103px;background:#e4e6ea"></div>
</div>
<div class="a" style="left:591px;top:491px;width:1px;height:12px;background:#d6d7da"></div>
<div class="a" style="left:691.5px;top:491px;width:1px;height:12px;background:#d6d7da"></div>
<div class="a" style="left:791.5px;top:491px;width:1px;height:12px;background:#d6d7da"></div>
<div class="a" style="left:891.5px;top:491px;width:1px;height:12px;background:#d6d7da"></div>
<div class="a" style="left:990.5px;top:491px;width:1px;height:12px;background:#d6d7da"></div>
<span class="a tx" style="left:315.5px;top:485px;line-height:23px;font-size:13px;font-weight:bold;transform:scaleX(1.1862);transform-origin:0 0;color:#111;">Name</span>
<span class="a tx" style="left:495.5px;top:485px;line-height:23px;font-size:13px;font-weight:bold;transform:scaleX(1.1679);transform-origin:0 0;color:#111;">Level</span>
<span class="a tx" style="left:595.7px;top:485px;line-height:23px;font-size:13px;font-weight:bold;transform:scaleX(1.1967);transform-origin:0 0;color:#111;">Status</span>
<span class="a tx" style="left:696px;top:485px;line-height:23px;font-size:13px;font-weight:bold;transform:scaleX(1.1624);transform-origin:0 0;color:#111;">Enabled</span>
<span class="a tx" style="left:795.4px;top:485px;line-height:23px;font-size:13px;font-weight:bold;transform:scaleX(1.1590);transform-origin:0 0;color:#111;">Trig</span>
<span class="a tx" style="left:896.5px;top:485px;line-height:23px;font-size:13px;font-weight:bold;transform:scaleX(1.1868);transform-origin:0 0;color:#111;">Text</span>
<div class="a" style="left:996px;top:485px;width:10px;height:23px;overflow:hidden"><span class="a tx" style="left:0px;top:0px;line-height:23px;font-size:13px;font-weight:bold;transform:scaleX(1.1757);transform-origin:0 0;color:#111;">Description</span></div>
<svg class="a" style="left:292.5px;top:512.5px" width="14" height="14" viewBox="0 0 14 14"><circle cx="6.8" cy="7" r="6.6" fill="#8c9cb4"/><path d="M5 3.6 L10 7 L5 10.4 Z" fill="#fff"/></svg>
<span class="a tx" style="left:314.7px;top:508px;line-height:23px;font-size:13px;font-weight:bold;transform:scaleX(1.1618);transform-origin:0 0;color:#9ea1a6;">Component Suspended</span>
<span class="a tx" style="left:495px;top:508px;line-height:23px;font-size:13px;transform:scaleX(1.1150);transform-origin:0 0;color:#8d939b;">Warning</span>
<svg class="a" style="left:693px;top:511.5px" width="17" height="17" viewBox="0 0 17 17"><rect x="1" y="1" width="15" height="15" rx="3" fill="#fff" stroke="#3c7bb7" stroke-width="1.4"/><path d="M4 8.2 L7 11.5 L12.5 3.8" fill="none" stroke="#2e6aa6" stroke-width="2.2" stroke-linecap="square"/></svg>
<svg class="a" style="left:793px;top:511.5px" width="17" height="17" viewBox="0 0 17 17"><rect x="1" y="1" width="15" height="15" rx="3" fill="#fff" stroke="#3c7bb7" stroke-width="1.4"/></svg>
<span class="a tx" style="left:896px;top:508px;line-height:23px;font-size:13px;transform:scaleX(1.1260);transform-origin:0 0;color:#9ea1a6;">Component ...</span>
<div class="a" style="left:996px;top:508px;width:10px;height:23px;overflow:hidden"><span class="a tx" style="left:0px;top:0px;line-height:23px;font-size:13px;letter-spacing:0.219px;color:#8d939b;">A</span></div>
<svg class="a" style="left:292.5px;top:535.5px" width="14" height="14" viewBox="0 0 14 14"><circle cx="6.8" cy="7" r="6.6" fill="#8c9cb4"/><path d="M5 3.6 L10 7 L5 10.4 Z" fill="#fff"/></svg>
<span class="a tx" style="left:314.7px;top:531px;line-height:23px;font-size:13px;font-weight:bold;transform:scaleX(1.1515);transform-origin:0 0;color:#9ea1a6;">Transmission Error</span>
<span class="a tx" style="left:495px;top:531px;line-height:23px;font-size:13px;transform:scaleX(1.1150);transform-origin:0 0;color:#8d939b;">Warning</span>
<svg class="a" style="left:693px;top:534.5px" width="17" height="17" viewBox="0 0 17 17"><rect x="1" y="1" width="15" height="15" rx="3" fill="#fff" stroke="#3c7bb7" stroke-width="1.4"/><path d="M4 8.2 L7 11.5 L12.5 3.8" fill="none" stroke="#2e6aa6" stroke-width="2.2" stroke-linecap="square"/></svg>
<svg class="a" style="left:793px;top:534.5px" width="17" height="17" viewBox="0 0 17 17"><rect x="1" y="1" width="15" height="15" rx="3" fill="#fff" stroke="#3c7bb7" stroke-width="1.4"/></svg>
<span class="a tx" style="left:896px;top:531px;line-height:23px;font-size:13px;transform:scaleX(1.1219);transform-origin:0 0;color:#9ea1a6;">IOServer tra...</span>
<div class="a" style="left:996px;top:531px;width:10px;height:23px;overflow:hidden"><span class="a tx" style="left:0px;top:0px;line-height:23px;font-size:13px;transform:scaleX(0.9649);transform-origin:0 0;color:#8d939b;">Tr</span></div>
<svg class="a" style="left:292px;top:558px" width="15" height="15" viewBox="0 0 15 15"><circle cx="7.2" cy="7.4" r="7" fill="#4eae18"/><rect x="2.6" y="6.2" width="9.2" height="2.5" fill="#fff"/><rect x="5.95" y="2.85" width="2.5" height="9.2" fill="#fff"/></svg>
<svg class="a" style="left:693px;top:557.5px" width="17" height="17" viewBox="0 0 17 17"><rect x="1" y="1" width="15" height="15" rx="3" fill="#fff" stroke="#3c7bb7" stroke-width="1.4"/><path d="M4 8.2 L7 11.5 L12.5 3.8" fill="none" stroke="#2e6aa6" stroke-width="2.2" stroke-linecap="square"/></svg>
<svg class="a" style="left:793px;top:557.5px" width="17" height="17" viewBox="0 0 17 17"><rect x="1" y="1" width="15" height="15" rx="3" fill="#fff" stroke="#3c7bb7" stroke-width="1.4"/></svg>
<svg class="a" style="left:494.5px;top:579px" width="8" height="8"><path d="M1.5 4 L6 0.5 L6 7.5 Z" fill="#555"/></svg>
<div class="a" style="left:502px;top:577.5px;width:61.5px;height:10px;background:#bdbec2"></div>
<svg class="a" style="left:997px;top:579px" width="8" height="8"><path d="M6.5 4 L2 0.5 L2 7.5 Z" fill="#555"/></svg>
<div class="a" style="left:285px;top:596.5px;width:721px;height:25px;background:#8797ae;border-radius:5px 5px 5px 5px"></div>
<span class="a tx" style="left:304.5px;top:596.5px;line-height:25px;font-size:13px;font-weight:bold;color:#fff">Connectors</span>
<div class="a" style="left:385px;top:599.0px;width:23px;height:20px;border-radius:10px;background:#fff;text-align:center;line-height:20px;font-size:11.5px;font-weight:bold;color:#8797ae">0</div>
<svg class="a" style="left:806.5px;top:603.5px" width="15" height="13" viewBox="0 0 15 13"><circle cx="5.6" cy="5.3" r="3.9" fill="none" stroke="#fff" stroke-width="2.3"/><line x1="8.4" y1="8.2" x2="12.4" y2="11.8" stroke="#fff" stroke-width="2.6" stroke-linecap="round"/></svg>
<span class="a tx" style="left:830.3px;top:597.5px;line-height:25px;font-size:13.5px;transform:scaleX(1.0170);transform-origin:0 0;color:#bcc6d4;">Search</span>
<svg class="a" style="left:978px;top:604.5px" width="16" height="10"><path d="M0.5 0.6 L15 0.6 L7.75 9 Z" fill="#fff"/></svg>
<div class="a" style="left:285px;top:629.5px;width:721px;height:25px;background:#8797ae;border-radius:5px 5px 0 0"></div>
<span class="a tx" style="left:304.5px;top:629.5px;line-height:25px;font-size:13px;font-weight:bold;color:#fff">States</span>
<div class="a" style="left:351.5px;top:632.0px;width:23px;height:20px;border-radius:10px;background:#fff;text-align:center;line-height:20px;font-size:11.5px;font-weight:bold;color:#8797ae">3</div>
<svg class="a" style="left:806.5px;top:636.5px" width="15" height="13" viewBox="0 0 15 13"><circle cx="5.6" cy="5.3" r="3.9" fill="none" stroke="#fff" stroke-width="2.3"/><line x1="8.4" y1="8.2" x2="12.4" y2="11.8" stroke="#fff" stroke-width="2.6" stroke-linecap="round"/></svg>
<span class="a tx" style="left:830.3px;top:630.5px;line-height:25px;font-size:13.5px;transform:scaleX(1.0170);transform-origin:0 0;color:#bcc6d4;">Search</span>
<svg class="a" style="left:978px;top:637.5px" width="16" height="10"><path d="M0.5 9 L15 9 L7.75 0.6 Z" fill="#fff"/></svg>
<div class="a" style="left:285px;top:654.5px;width:721px;height:115px;background:#f0f1f3;border-radius:0 0 5px 5px;overflow:hidden">
<div class="a" style="left:0;top:23px;width:721px;height:23px;background:#e8e9ec"></div>
<div class="a" style="left:0;top:69px;width:721px;height:23px;background:#e8e9ec"></div>
<div class="a" style="left:0;top:0;width:207px;height:115px;background:#e4e6ea"></div>
</div>
<div class="a" style="left:1005px;top:660.5px;width:1px;height:12px;background:#d6d7da"></div>
<span class="a tx" style="left:315.5px;top:654.5px;line-height:23px;font-size:13px;font-weight:bold;transform:scaleX(1.1862);transform-origin:0 0;color:#111;">Name</span>
<span class="a tx" style="left:495.5px;top:654.5px;line-height:23px;font-size:13px;font-weight:bold;transform:scaleX(1.1757);transform-origin:0 0;color:#111;">Description</span>
<svg class="a" style="left:292.5px;top:682.0px" width="14" height="14" viewBox="0 0 14 14"><circle cx="6.8" cy="7" r="6.6" fill="#8c9cb4"/><path d="M5 3.6 L10 7 L5 10.4 Z" fill="#fff"/></svg>
<span class="a tx" style="left:314.7px;top:677.5px;line-height:23px;font-size:13px;font-weight:bold;transform:scaleX(1.1823);transform-origin:0 0;color:#9ea1a6;">Null</span>
<svg class="a" style="left:292.5px;top:705.0px" width="14" height="14" viewBox="0 0 14 14"><circle cx="6.8" cy="7" r="6.6" fill="#8c9cb4"/><path d="M5 3.6 L10 7 L5 10.4 Z" fill="#fff"/></svg>
<span class="a tx" style="left:314.7px;top:700.5px;line-height:23px;font-size:13px;font-weight:bold;transform:scaleX(1.1684);transform-origin:0 0;color:#9ea1a6;">Online</span>
<span class="a tx" style="left:495px;top:700.5px;line-height:23px;font-size:13px;transform:scaleX(1.1017);transform-origin:0 0;color:#9fa1a4;">The IOServer is Online.</span>
<svg class="a" style="left:292.5px;top:728.0px" width="14" height="14" viewBox="0 0 14 14"><circle cx="6.8" cy="7" r="6.6" fill="#8c9cb4"/><path d="M5 3.6 L10 7 L5 10.4 Z" fill="#fff"/></svg>
<span class="a tx" style="left:314.7px;top:723.5px;line-height:23px;font-size:13px;font-weight:bold;transform:scaleX(1.1679);transform-origin:0 0;color:#9ea1a6;">Offline</span>
<span class="a tx" style="left:495px;top:723.5px;line-height:23px;font-size:13px;transform:scaleX(1.1090);transform-origin:0 0;color:#9fa1a4;">The IOServer is Offline.</span>
<div class="a" style="left:1014px;top:67px;width:9px;height:676px;background:#dcdde1"></div>
<div class="a" style="left:1014.5px;top:78px;width:9px;height:330px;background:#bfc0c4"></div>
<svg class="a" style="left:1015px;top:70px" width="8" height="6"><path d="M0.5 5 L8 5 L4.5 1 Z" fill="#555"/></svg>
<svg class="a" style="left:1015px;top:734px" width="8" height="6"><path d="M0.5 1 L8 1 L4.5 5 Z" fill="#555"/></svg>
<div class="a" style="left:80px;top:743px;width:943px;height:24px;background:#e9eaee"></div>
<div class="a" style="left:83px;top:745.5px;width:23.5px;height:21.5px;background:#c9ccd1"></div>
<svg class="a" style="left:83px;top:745.5px" width="24" height="22"><rect x="4.5" y="4.5" width="15" height="13" rx="2" fill="none" stroke="#9aa3af" stroke-width="1.4"/><rect x="6.5" y="6.5" width="3" height="9" fill="#aab2bd"/></svg>
<div class="sbox" style="left:113.5px;top:746.5px;width:199px;height:20.5px;border-color:#c3c5c9;border-radius:3px 3px 0 0"></div>
<svg class="a" style="left:118px;top:749px" width="20" height="15"><circle cx="9" cy="6" r="3.6" fill="none" stroke="#444" stroke-width="1.4"/><line x1="6.4" y1="8.6" x2="2.5" y2="12.5" stroke="#444" stroke-width="1.7"/><path d="M13.3 6.3 L17.5 6.3 L15.4 8.6 Z" fill="#444"/></svg>
<span class="a tx" style="left:142.3px;top:748.5px;line-height:16px;font-size:13px;transform:scaleX(1.0520);transform-origin:0 0;color:#8f9194;">Type to locate (Ctrl+K)</span>
<div class="a" style="left:316px;top:746px;width:1px;height:21px;background:#cfd0d3"></div>
<div class="a" style="left:318px;top:746px;width:69px;height:21px;background:#eef0f3"></div>
<span class="a tx" style="left:328.5px;top:748.5px;line-height:16px;font-size:13px;letter-spacing:0.410px;color:#fbfbfc;">1</span>
<span class="a tx" style="left:344.2px;top:748.5px;line-height:16px;font-size:13px;transform:scaleX(0.9926);transform-origin:0 0;color:#2a2a2a;">Issues</span>
<div class="a" style="left:389px;top:746px;width:73px;height:21px;background:#eef0f3"></div>
<span class="a tx" style="left:397px;top:748.5px;line-height:16px;font-size:13px;letter-spacing:0.410px;color:#fbfbfc;">2</span>
<span class="a tx" style="left:412.6px;top:748.5px;line-height:16px;font-size:13px;transform:scaleX(1.0276);transform-origin:0 0;color:#2a2a2a;">Alarms</span>
<div class="a" style="left:464px;top:746px;width:94px;height:21px;background:#eef0f3"></div>
<span class="a tx" style="left:469px;top:748.5px;line-height:16px;font-size:13px;letter-spacing:0.410px;color:#fbfbfc;">3</span>
<span class="a tx" style="left:484.7px;top:748.5px;line-height:16px;font-size:13px;transform:scaleX(0.9906);transform-origin:0 0;color:#2a2a2a;">Search R...</span>
<div class="a" style="left:561px;top:746px;width:96.5px;height:21px;background:#eef0f3"></div>
<span class="a tx" style="left:567px;top:748.5px;line-height:16px;font-size:13px;letter-spacing:0.410px;color:#fbfbfc;">4</span>
<span class="a tx" style="left:583.7px;top:748.5px;line-height:16px;font-size:13px;transform:scaleX(1.0516);transform-origin:0 0;color:#2a2a2a;">Applicatio...</span>
<div class="a" style="left:660px;top:746px;width:94px;height:21px;background:#eef0f3"></div>
<span class="a tx" style="left:666px;top:748.5px;line-height:16px;font-size:13px;letter-spacing:0.410px;color:#fbfbfc;">5</span>
<span class="a tx" style="left:682.7px;top:748.5px;line-height:16px;font-size:13px;transform:scaleX(1.0353);transform-origin:0 0;color:#2a2a2a;">Compile ...</span>
<div class="a" style="left:757px;top:746px;width:96.5px;height:21px;background:#eef0f3"></div>
<span class="a tx" style="left:764.5px;top:748.5px;line-height:16px;font-size:13px;letter-spacing:0.410px;color:#fbfbfc;">6</span>
<span class="a tx" style="left:781px;top:748.5px;line-height:16px;font-size:13px;transform:scaleX(1.0306);transform-origin:0 0;color:#2a2a2a;">General ...</span>
<div class="a" style="left:857px;top:746px;width:95.5px;height:21px;background:#eef0f3"></div>
<span class="a tx" style="left:863.5px;top:748.5px;line-height:16px;font-size:13px;letter-spacing:0.410px;color:#fbfbfc;">8</span>
<span class="a tx" style="left:879.8px;top:748.5px;line-height:16px;font-size:13px;transform:scaleX(1.0361);transform-origin:0 0;color:#2a2a2a;">Connecti...</span>
<svg class="a" style="left:962px;top:749px" width="10" height="14"><path d="M1 5.5 L8.5 5.5 L4.75 1.5 Z M1 8.5 L8.5 8.5 L4.75 12.5 Z" fill="#8091a8"/></svg>
<div class="a" style="left:988px;top:746px;width:13px;height:21px;background:#c3c5c9;border:1px solid #a9abaf"></div>
<svg class="a" style="left:988px;top:746px" width="13" height="21"><path d="M2.5 10.5 L10.5 10.5 L6.5 6.5 Z" fill="#dcdde0"/></svg>
<svg class="a" style="left:0;top:0" width="1023" height="767" viewBox="0 0 1023 767"><line x1="801" y1="87" x2="833" y2="120" stroke="#f7931e" stroke-width="2.4"/><path d="M843.8 130.6 L826.8 122.3 L835.4 113.9 Z" fill="#f7931e"/><line x1="811" y1="206" x2="833" y2="177" stroke="#f7931e" stroke-width="2.4"/><path d="M843.5 164.3 L837 182.2 L827.3 175.6 Z" fill="#f7931e"/><circle cx="888.2" cy="136" r="8.7" fill="#f7931e"/><circle cx="888.2" cy="158" r="8.7" fill="#f7931e"/></svg>
<span class="a" style="left:882.2px;top:129px;width:12px;text-align:center;line-height:14px;font-size:13px;font-weight:bold;color:#fff">A</span>
<span class="a" style="left:882.2px;top:151px;width:12px;text-align:center;line-height:14px;font-size:13px;font-weight:bold;color:#fff">B</span>
<div class="a" style="left:692px;top:70.5px;width:152.5px;height:18.5px;background:#f7931e;border-radius:3px"></div>
<span class="a tx" style="left:698px;top:70.5px;line-height:18.5px;font-size:13px;font-weight:bold;letter-spacing:-0.25px;color:#fff">Test: change value here</span>
<div class="a" style="left:699px;top:205.5px;width:152px;height:19px;background:#f7931e;border-radius:3px"></div>
<span class="a tx" style="left:705px;top:205.5px;line-height:19px;font-size:13px;font-weight:bold;letter-spacing:-0.25px;color:#fff">Test: inspect value here</span>
</body></html>
